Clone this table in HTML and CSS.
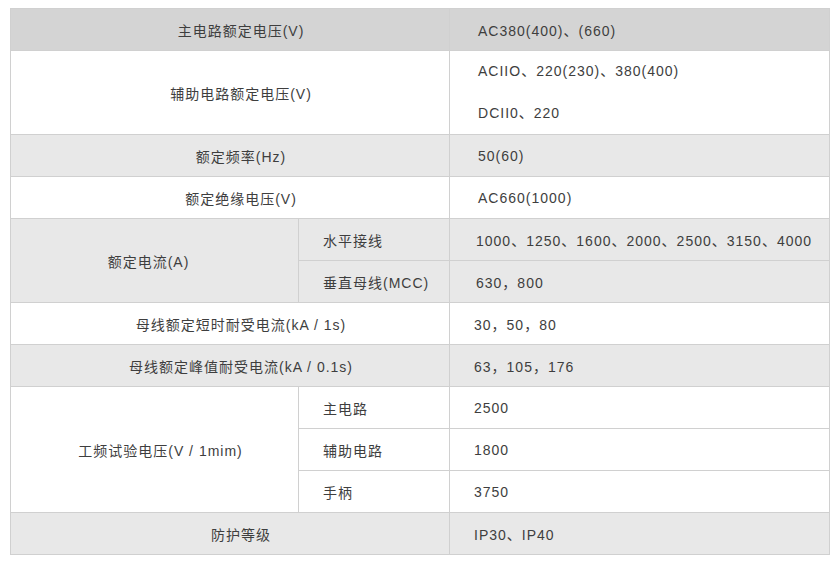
FILE: index.html
```html
<!DOCTYPE html>
<html lang="zh-CN">
<head>
<meta charset="utf-8">
<link rel="stylesheet" href="styles.css">
</head>
<body>
<div class="wrap">
<table class="spec">
  <colgroup>
    <col class="c1"><col class="c2"><col class="c3">
  </colgroup>
  <tr class="head">
    <td colspan="2" class="label wide">主电路额定电压(V)</td>
    <td class="val">AC380(400)、(660)</td>
  </tr>
  <tr class="white">
    <td colspan="2" class="label wide">辅助电路额定电压(V)</td>
    <td class="val"><div class="line">ACIIO、220(230)、380(400)</div><div class="line">DCII0、220</div></td>
  </tr>
  <tr class="gray">
    <td colspan="2" class="label wide">额定频率(Hz)</td>
    <td class="val">50(60)</td>
  </tr>
  <tr class="white">
    <td colspan="2" class="label wide">额定绝缘电压(V)</td>
    <td class="val">AC660(1000)</td>
  </tr>
  <tr class="gray">
    <td rowspan="2" class="label left">额定电流(A)</td>
    <td class="sub">水平接线</td>
    <td class="val v2">1000、1250、1600、2000、2500、3150、4000</td>
  </tr>
  <tr class="gray">
    <td class="sub">垂直母线(MCC)</td>
    <td class="val v2">630，800</td>
  </tr>
  <tr class="white">
    <td colspan="2" class="label wide">母线额定短时耐受电流(kA / 1s)</td>
    <td class="val v3">30，50，80</td>
  </tr>
  <tr class="gray">
    <td colspan="2" class="label wide">母线额定峰值耐受电流(kA / 0.1s)</td>
    <td class="val v3">63，105，176</td>
  </tr>
  <tr class="white">
    <td rowspan="3" class="label right">工频试验电压(V / 1mim)</td>
    <td class="sub">主电路</td>
    <td class="val v3">2500</td>
  </tr>
  <tr class="white">
    <td class="sub">辅助电路</td>
    <td class="val v3">1800</td>
  </tr>
  <tr class="white">
    <td class="sub">手柄</td>
    <td class="val v3">3750</td>
  </tr>
  <tr class="gray">
    <td colspan="2" class="label wide">防护等级</td>
    <td class="val v3">IP30、IP40</td>
  </tr>
</table>
</div>
</body>
</html>
```
FILE: styles.css
```css
html, body {
  margin: 0;
  padding: 0;
  background: #ffffff;
}
.wrap {
  padding: 8px 10px;
}
.spec {
  border-collapse: collapse;
  width: 819px;
  table-layout: fixed;
  font-family: "Liberation Sans", "Noto Sans CJK SC", sans-serif;
  font-size: 14px;
  letter-spacing: 1px;
  color: #3e3e3e;
}
.c1 { width: 288px; }
.c2 { width: 151px; }
.c3 { width: 380px; }
.spec td {
  border: 1px solid #d0d0d0;
  height: 41px;
  padding: 0;
  vertical-align: middle;
  white-space: nowrap;
}
.head td { background: #d4d4d4; }
.gray td { background: #e8e8e8; }
.white td { background: #ffffff; }
.label {
  text-align: center;
}
.spec td.wide { padding-left: 22px; }
.spec td.left { padding-right: 12px; }
.spec td.right { padding-left: 12px; }
.spec td.sub {
  padding-left: 24px;
}
.spec td.val {
  padding-left: 28px;
}
.spec td.val.v2 { padding-left: 26px; }
.spec td.val.v3 { padding-left: 24px; }
.line {
  line-height: 41.5px;
}
```
